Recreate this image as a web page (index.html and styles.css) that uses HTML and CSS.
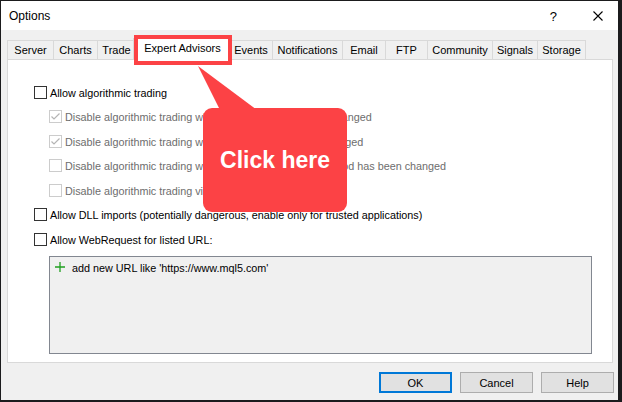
FILE: index.html
```html
<!DOCTYPE html>
<html>
<head>
<meta charset="utf-8">
<title>Options</title>
<link rel="stylesheet" href="styles.css">
</head>
<body>
<div class="window">
  <div class="titlebar">
    <span class="title">Options</span>
    <span class="help-q">?</span>
    <svg class="close-x" width="10" height="10" viewBox="0 0 10 10"><path d="M0.5 0.5L9.5 9.5M9.5 0.5L0.5 9.5" stroke="#000" stroke-width="1.1" fill="none"/></svg>
  </div>
  <div class="content">
    <div class="tabs">
      <div class="tab t-server">Server</div>
      <div class="tab t-charts">Charts</div>
      <div class="tab t-trade">Trade</div>
      <div class="tab tab-active">Expert Advisors</div>
      <div class="tab t-events">Events</div>
      <div class="tab t-notif">Notifications</div>
      <div class="tab t-email">Email</div>
      <div class="tab t-ftp">FTP</div>
      <div class="tab t-comm">Community</div>
      <div class="tab t-signals">Signals</div>
      <div class="tab t-storage">Storage</div>
    </div>
    <div class="panel">
      <div class="row">
        <span class="cb"></span><span class="label">Allow algorithmic trading</span>
      </div>
      <div class="row sub disabled">
        <span class="cb cb-checked"><svg width="11" height="11" viewBox="0 0 11 11"><path d="M1.5 5.5L4 8L9.5 2.5" stroke="#b4b4b4" stroke-width="1.2" fill="none"/></svg></span><span class="label">Disable algorithmic trading when the account has been changed</span>
      </div>
      <div class="row sub disabled">
        <span class="cb cb-checked"><svg width="11" height="11" viewBox="0 0 11 11"><path d="M1.5 5.5L4 8L9.5 2.5" stroke="#b4b4b4" stroke-width="1.2" fill="none"/></svg></span><span class="label">Disable algorithmic trading when the profile has been changed</span>
      </div>
      <div class="row sub disabled">
        <span class="cb"></span><span class="label">Disable algorithmic trading when the charts symbol or period has been changed</span>
      </div>
      <div class="row sub disabled">
        <span class="cb"></span><span class="label">Disable algorithmic trading via external Python API</span>
      </div>
      <div class="row">
        <span class="cb"></span><span class="label">Allow DLL imports (potentially dangerous, enable only for trusted applications)</span>
      </div>
      <div class="row">
        <span class="cb"></span><span class="label">Allow WebRequest for listed URL:</span>
      </div>
      <div class="urlbox">
        <div class="url-item">
          <svg class="plus" width="10" height="10" viewBox="0 0 10 10"><path d="M5 0V10M0 5H10" stroke="#1fa01f" stroke-width="1.3" fill="none"/></svg>
          <span class="label">add new URL like 'https://www.mql5.com'</span>
        </div>
      </div>
    </div>
    <div class="buttons">
      <button class="btn btn-default">OK</button>
      <button class="btn">Cancel</button>
      <button class="btn">Help</button>
    </div>
  </div>
</div>
<div class="callout">
  <svg class="callout-shape" width="152" height="150" viewBox="0 0 152 150">
    <polygon points="2,2 24,46 61,46" fill="#fc4245"/>
    <rect x="7" y="44" width="144" height="104" rx="9" ry="9" fill="#fc4245"/>
  </svg>
  <div class="callout-text">Click here</div>
</div>
</body>
</html>
```

FILE: styles.css
```css
*, *::before, *::after {
  box-sizing: border-box;
}

html, body {
  margin: 0;
  padding: 0;
}

body {
  width: 622px;
  height: 402px;
  overflow: hidden;
  position: relative;
  background: #1b1b1d;
  font-family: "Liberation Sans", Arial, sans-serif;
  font-size: 11px;
  color: #000;
}

.window {
  margin: 1px 0 0 1px;
  width: 617px;
  height: 399px;
  background: #f0f0f0;
  display: flex;
  flex-direction: column;
}

.titlebar {
  height: 29px;
  background: #fff;
  display: flex;
  align-items: center;
  padding: 0 15px 0 8px;
}

.title {
  flex: 1;
  font-size: 12px;
  padding-top: 1px;
}

.help-q {
  font-size: 13px;
  margin-right: 36px;
  padding-top: 1px;
}

.close-x {
  display: block;
  margin-top: 1px;
}

.content {
  flex: 1;
  padding: 10px 4px 0 6px;
  display: flex;
  flex-direction: column;
}

.tabs {
  display: flex;
  height: 19px;
}

.tab {
  height: 19px;
  border: 1px solid #d9d9d9;
  border-bottom: none;
  background: #f0f0f0;
  margin-left: -1px;
  display: flex;
  align-items: center;
  justify-content: center;
  white-space: nowrap;
  padding-top: 0;
}

.t-server { width: 47px; margin-left: 0; }
.t-charts { width: 45px; }
.t-trade { width: 39px; }
.t-events { width: 44px; }
.t-notif { width: 71px; }
.t-email { width: 44px; }
.t-ftp { width: 43px; }
.t-comm { width: 66px; }
.t-signals { width: 46px; }
.t-storage { width: 49px; }

.tab-active {
  position: relative;
  z-index: 2;
  width: 99px;
  height: 22px;
  margin: -2px -2px 0 -3px;
  background: #fff;
  padding-top: 0;
  padding-bottom: 3px;
}

.tab-active::after {
  content: "";
  position: absolute;
  left: 0;
  top: -4px;
  width: 98px;
  height: 30px;
  border: 4px solid #fc4245;
}

.panel {
  width: 606px;
  height: 304px;
  background: #fff;
  border: 1px solid #d9d9d9;
  padding: 20px 0 0 26px;
}

.row {
  display: flex;
  align-items: center;
  height: 24.5px;
  white-space: nowrap;
}

.row.sub {
  padding-left: 15px;
}

.cb {
  width: 13px;
  height: 13px;
  border: 1px solid #333;
  background: #fff;
  margin-right: 3px;
  flex: none;
  display: flex;
  align-items: center;
  justify-content: center;
}

.disabled .cb {
  border-color: #cccccc;
}

.disabled .label {
  color: #6d6d6d;
}

.label {
  font-size: 10.8px;
  padding-top: 1px;
}

.urlbox {
  margin: 4px 0 0 15px;
  width: 543px;
  height: 98px;
  border: 1px solid #828790;
  background: #f0f0f0;
  padding: 5px 0 0 5px;
}

.url-item {
  display: flex;
  align-items: center;
  gap: 7px;
  height: 11px;
}

.plus {
  display: block;
  flex: none;
}

.buttons {
  display: flex;
  justify-content: flex-end;
  gap: 8px;
  margin-top: 9px;
}

.btn {
  width: 73px;
  height: 21px;
  background: #e1e1e1;
  border: 1px solid #adadad;
  font-family: "Liberation Sans", Arial, sans-serif;
  font-size: 11px;
  color: #000;
  padding: 1px 0 0;
  margin: 0;
}

.btn-default {
  border: 2px solid #0078d7;
}

.callout {
  position: absolute;
  left: 196px;
  top: 64px;
  width: 152px;
  height: 150px;
}

.callout-shape {
  display: block;
}

.callout-text {
  position: absolute;
  left: 7px;
  top: 44px;
  width: 144px;
  height: 104px;
  display: flex;
  align-items: center;
  justify-content: center;
  color: #fff;
  font-family: "Liberation Sans", Arial, sans-serif;
  font-weight: bold;
  font-size: 23px;
}
```
